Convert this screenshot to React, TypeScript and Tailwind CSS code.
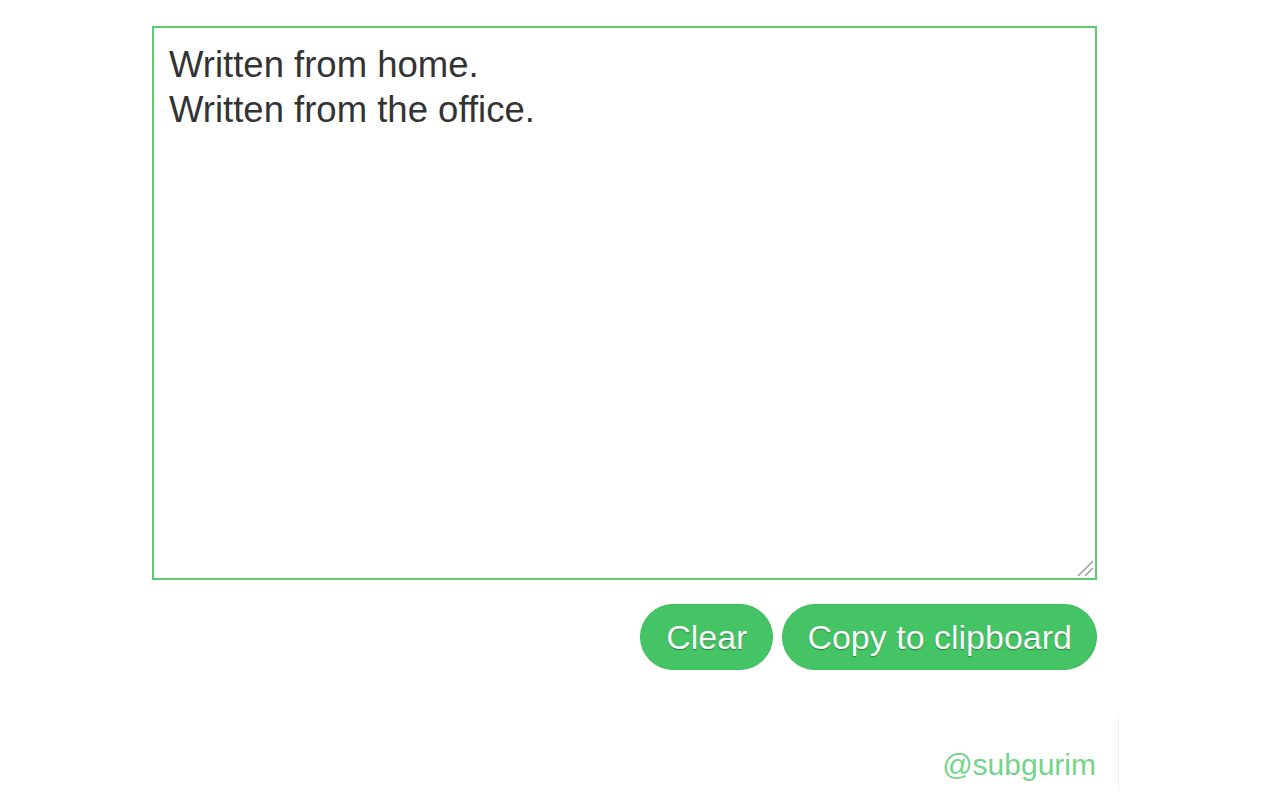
import React from "react";

export default function App() {
  return (
    <div className="min-h-[800px] w-[1280px] bg-white pt-[26px] pl-[152px] font-['Liberation_Sans',Arial,sans-serif]">
      <div className="relative w-[945px]">
        <textarea
          className="block w-[945px] h-[554px] resize-none border-2 border-[#5ccb6d] px-[15px] pt-[14px] pb-[10px] text-[36.5px] leading-[45px] text-[#333333] outline-none font-['Liberation_Sans',Arial,sans-serif]"
          defaultValue={"Written from home.\nWritten from the office."}
        />
        <svg
          className="pointer-events-none absolute right-[3px] bottom-[3px]"
          width="18"
          height="18"
          viewBox="0 0 18 18"
        >
          <line x1="2" y1="17" x2="17" y2="2" stroke="#9a9a9a" strokeWidth="1.4" />
          <line x1="9" y1="17" x2="17" y2="9" stroke="#9a9a9a" strokeWidth="1.4" />
        </svg>
      </div>
      <div className="mt-[24px] flex w-[945px] justify-end gap-[9px]">
        <button className="h-[66px] rounded-full border border-[#3fbb5d] bg-[#44c464] px-[25px] text-[34px] text-[#f7f7f7] [text-shadow:0_1px_1px_rgba(0,0,0,0.35)]">
          Clear
        </button>
        <button className="h-[66px] rounded-full border border-[#3fbb5d] bg-[#44c464] px-[24px] text-[34px] text-[#f7f7f7] [text-shadow:0_1px_1px_rgba(0,0,0,0.35)]">
          Copy to clipboard
        </button>
      </div>
      <div className="mt-[43px] flex h-[77px]">
        <div className="w-[945px] pt-[34px] pr-px text-right text-[30px] leading-[36px] text-[#72d588]">
          @subgurim
        </div>
        <div className="ml-[21px] h-full w-px bg-[#eeeeee]" />
      </div>
    </div>
  );
}
